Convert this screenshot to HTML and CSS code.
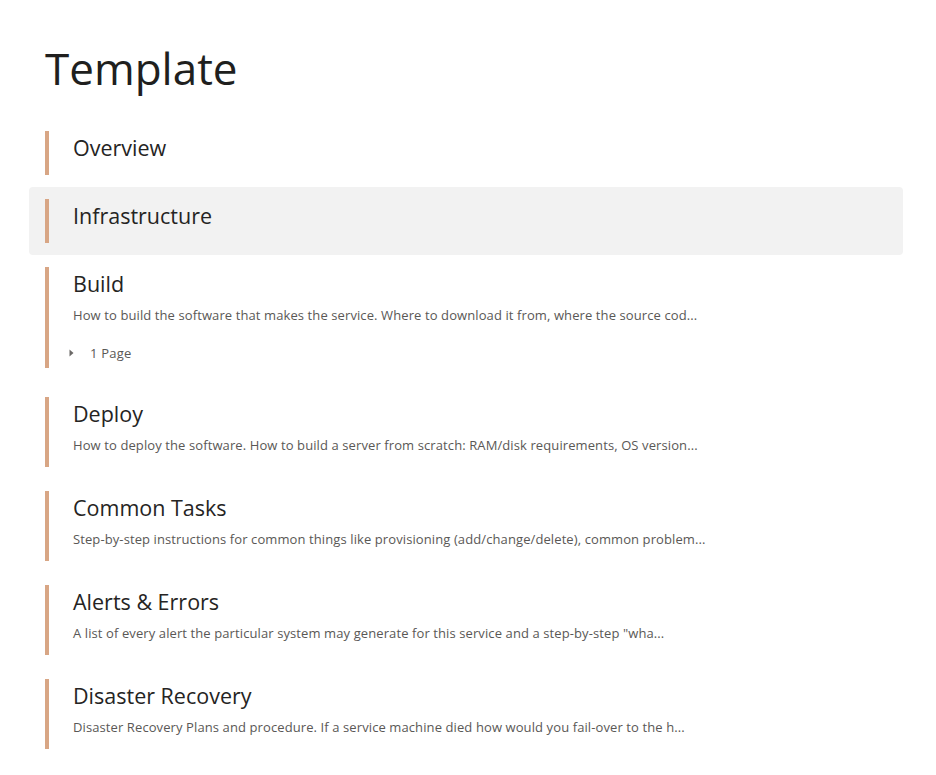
FILE: index.html
```html
<!DOCTYPE html>
<html lang="en">
<head>
<meta charset="utf-8">
<title>Template</title>
<link rel="stylesheet" href="styles.css">
</head>
<body>
<main class="page">
  <h1 class="page-title">Template</h1>
  <ul class="sections">
    <li class="section">
      <div class="section-main">
        <div class="section-title">Overview</div>
      </div>
    </li>
    <li class="section is-hover">
      <div class="section-main">
        <div class="section-title">Infrastructure</div>
      </div>
    </li>
    <li class="section has-children">
      <div class="section-main">
        <div class="section-title">Build</div>
        <div class="section-desc">How to build the software that makes the service. Where to download it from, where the source cod...</div>
      </div>
      <div class="section-children">
        <svg class="caret" width="5" height="8" viewBox="0 0 5 8"><path d="M0.5 0.5 L4.5 4 L0.5 7.5 Z" fill="#6b6967"/></svg>
        <span class="children-count">1 Page</span>
      </div>
    </li>
    <li class="section">
      <div class="section-main">
        <div class="section-title">Deploy</div>
        <div class="section-desc">How to deploy the software. How to build a server from scratch: RAM/disk requirements, OS version...</div>
      </div>
    </li>
    <li class="section">
      <div class="section-main">
        <div class="section-title">Common Tasks</div>
        <div class="section-desc">Step-by-step instructions for common things like provisioning (add/change/delete), common problem...</div>
      </div>
    </li>
    <li class="section">
      <div class="section-main">
        <div class="section-title">Alerts &amp; Errors</div>
        <div class="section-desc">A list of every alert the particular system may generate for this service and a step-by-step "wha...</div>
      </div>
    </li>
    <li class="section">
      <div class="section-main">
        <div class="section-title">Disaster Recovery</div>
        <div class="section-desc">Disaster Recovery Plans and procedure. If a service machine died how would you fail-over to the h...</div>
      </div>
    </li>
  </ul>
</main>
</body>
</html>
```

FILE: styles.css
```css
* { box-sizing: border-box; }

html, body {
  margin: 0;
  padding: 0;
  background: #ffffff;
}

body {
  font-family: "Open Sans", "Noto Sans", sans-serif;
  color: #252423;
}

.page {
  width: 874px;
  margin-left: 29px;
  padding-top: 40px;
}

.page-title {
  margin: 0 0 23px 0;
  padding-left: 16px;
  font-size: 44px;
  line-height: 56px;
  font-weight: 400;
  color: #201f1e;
}

.sections {
  list-style: none;
  margin: 0;
  padding: 0;
}

.section {
  padding: 12px 16px;
  border-radius: 4px;
}

.section.is-hover {
  background: #f2f2f2;
}

.section.has-children {
  padding-bottom: 17px;
}

.section-main {
  border-left: 4px solid #d8a685;
  padding: 0 0 10px 24px;
}

.section-title {
  font-size: 21.5px;
  line-height: 34px;
  color: #252423;
}

.section-desc {
  margin-top: 4px;
  margin-bottom: 2px;
  font-size: 13px;
  line-height: 20px;
  letter-spacing: 0.1px;
  color: #5a5856;
  white-space: nowrap;
}

.section-children {
  display: flex;
  align-items: center;
  gap: 16px;
  height: 31px;
  padding: 6px 0 5px 20px;
  border-left: 4px solid #d8a685;
  background: linear-gradient(#b78a6c, #b78a6c) no-repeat left top / 4px 1px;
  background-origin: border-box;
}

.caret {
  display: block;
}

.children-count {
  font-size: 13px;
  line-height: 20px;
  letter-spacing: 0.2px;
  color: #5a5856;
}
```
